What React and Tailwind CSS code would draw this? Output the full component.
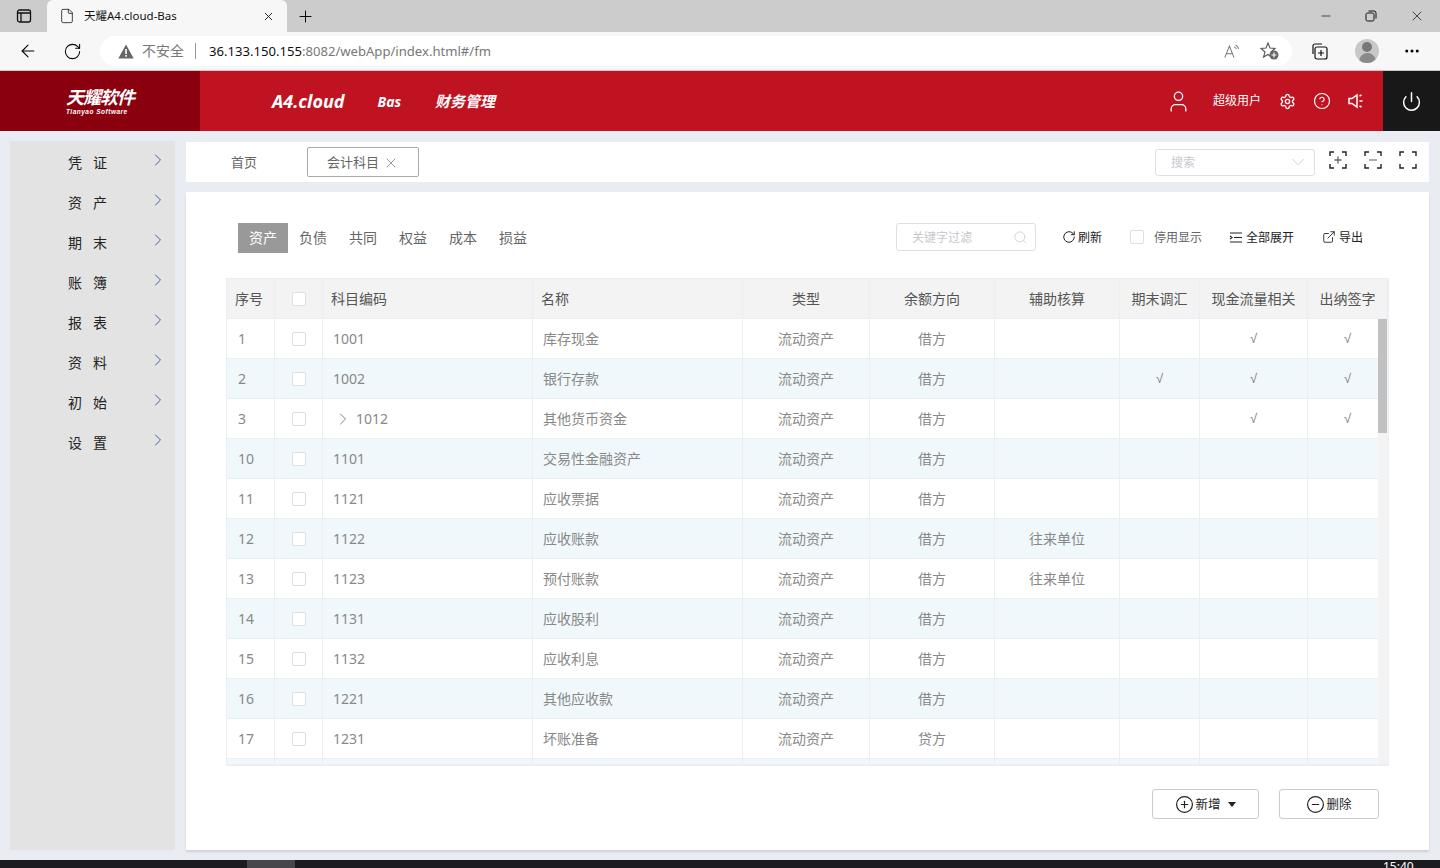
import React from 'react';
import { ChevronRight, ChevronDown, User, Settings, CircleHelp, Power, Search, RotateCw, ExternalLink, X, Plus, ArrowLeft, File, MoreHorizontal, Minus, CirclePlus, CircleMinus } from 'lucide-react';

const CJK = 'font-["Noto_Sans","Noto_Sans_CJK_SC",sans-serif]';
const widths = ['w-[48px]', 'w-[48px]', 'w-[210px]', 'w-[210px]', 'w-[127px]', 'w-[125px]', 'w-[125px]', 'w-[80px]', 'w-[108px]', 'w-[80px]'];
const menu = [['凭', '证'], ['资', '产'], ['期', '末'], ['账', '簿'], ['报', '表'], ['资', '料'], ['初', '始'], ['设', '置']];
const heads = ['序号', '', '科目编码', '名称', '类型', '余额方向', '辅助核算', '期末调汇', '现金流量相关', '出纳签字'];
const rows = [
  ['1', '1001', '库存现金', '流动资产', '借方', '', '', '√', '√'],
  ['2', '1002', '银行存款', '流动资产', '借方', '', '√', '√', '√'],
  ['3', '1012', '其他货币资金', '流动资产', '借方', '', '', '√', '√', true],
  ['10', '1101', '交易性金融资产', '流动资产', '借方', '', '', '', ''],
  ['11', '1121', '应收票据', '流动资产', '借方', '', '', '', ''],
  ['12', '1122', '应收账款', '流动资产', '借方', '往来单位', '', '', ''],
  ['13', '1123', '预付账款', '流动资产', '借方', '往来单位', '', '', ''],
  ['14', '1131', '应收股利', '流动资产', '借方', '', '', '', ''],
  ['15', '1132', '应收利息', '流动资产', '借方', '', '', '', ''],
  ['16', '1221', '其他应收款', '流动资产', '借方', '', '', '', ''],
  ['17', '1231', '坏账准备', '流动资产', '贷方', '', '', '', ''],
  ['18', '', '', '', '', '', '', '', ''],
];

function Box() {
  return <span className="block w-[14px] h-[14px] rounded-[2px] border border-[#dcdfe6] bg-white" />;
}

function Frame({ children }) {
  return (
    <svg width="18" height="18" viewBox="0 0 18 18" fill="none" stroke="#222" strokeWidth="1.4">
      <path d="M1 5V1h4M13 1h4v4M17 13v4h-4M5 17H1v-4" />
      {children}
    </svg>
  );
}

function Cell({ i, children, className = '' }) {
  return <div className={`${widths[i]} shrink-0 h-full border-r border-[#ebeef5] flex items-center ${className}`}>{children}</div>;
}

function Tick({ v }) {
  return <span className='font-["Liberation_Sans",sans-serif] text-[13px] text-[#777]'>{v}</span>;
}

function Row({ r, idx }) {
  return (
    <div className={`flex h-[40px] border-b border-[#ebeef5] text-[14px] text-[#888] ${idx % 2 ? 'bg-[#f1f8fb]' : 'bg-white'}`}>
      <Cell i={0} className="pl-[11px]">{r[0]}</Cell>
      <Cell i={1} className="justify-center"><Box /></Cell>
      <Cell i={2} className={r[9] ? 'pl-[10px]' : 'pl-[10px]'}>
        {r[9] && <ChevronRight size={20} strokeWidth={1} className="mr-[3px] text-[#666]" />}
        {r[1]}
      </Cell>
      <Cell i={3} className="pl-[10px]">{r[2]}</Cell>
      <Cell i={4} className="justify-center">{r[3]}</Cell>
      <Cell i={5} className="justify-center">{r[4]}</Cell>
      <Cell i={6} className="justify-center">{r[5]}</Cell>
      <Cell i={7} className="justify-center"><Tick v={r[6]} /></Cell>
      <Cell i={8} className="justify-center"><Tick v={r[7]} /></Cell>
      <Cell i={9} className="justify-center"><Tick v={r[8]} /></Cell>
    </div>
  );
}

export default function App() {
  return (
    <div className={`w-[1440px] h-[868px] overflow-hidden flex flex-col bg-[#e9edf3] ${CJK}`}>
      {/* tab strip */}
      <div className="h-[32px] shrink-0 bg-[#cccccc] flex items-end">
        <div className="w-[47px] h-full flex items-center justify-center">
          <svg width="16" height="16" viewBox="0 0 16 16" fill="none" stroke="#111" strokeWidth="1.3">
            <rect x="1.5" y="2" width="13" height="12" rx="2" />
            <path d="M1.5 5h13M5 5v9" />
          </svg>
        </div>
        <div className="w-[240px] h-[32px] bg-[#f7f7f7] rounded-t-[6px] flex items-center pl-[12px] pr-[12px] text-[11.5px] text-[#111]">
          <File size={16} strokeWidth={1.2} />
          <span className="ml-[9px] flex-1">天耀A4.cloud-Bas</span>
          <X size={13} strokeWidth={1.6} />
        </div>
        <div className="w-[36px] h-full flex items-center justify-center"><Plus size={19} strokeWidth={1.2} /></div>
        <div className="flex-1" />
        <div className="flex h-full items-center text-[#111] pr-[15px] gap-[32px]">
          <Minus size={14} strokeWidth={1.2} />
          <svg width="12" height="12" viewBox="0 0 12 12" fill="none" stroke="#111" strokeWidth="1">
            <rect x="1" y="3" width="8" height="8" rx="1.5" />
            <path d="M3.5 1h5.5a2 2 0 0 1 2 2v5.5" />
          </svg>
          <X size={16} strokeWidth={1.1} />
        </div>
      </div>
      {/* toolbar */}
      <div className="h-[39px] shrink-0 bg-[#f7f7f7] border-b border-[#c8c8c8] flex items-center">
        <div className="w-[56px] flex justify-center"><ArrowLeft size={20} strokeWidth={1.3} /></div>
        <div className="w-[32px] flex justify-center"><RotateCw size={19} strokeWidth={1.3} /></div>
        <div className="ml-[12px] w-[1192px] h-[30px] rounded-full bg-white flex items-center pl-[18px] pr-[12px] text-[14px]">
          <svg width="16" height="15" viewBox="0 0 16 15"><path d="M8 0.5 L15.7 14.5 H0.3 Z" fill="#666" /><rect x="7.2" y="5" width="1.6" height="5" fill="#fff" /><rect x="7.2" y="11" width="1.6" height="1.7" fill="#fff" /></svg>
          <span className="ml-[8px] text-[#777] -mt-[1px]">不安全</span>
          <span className="ml-[11px] w-px h-[16px] bg-[#999]" />
          <span className="ml-[13px] mt-[1px] text-[13.1px] text-[#111]">36.133.150.155<span className="text-[#777]">:8082/webApp/index.html#/fm</span></span>
          <span className="flex-1" />
          <svg width="17" height="17" viewBox="0 0 22 20" fill="none" stroke="#777" strokeWidth="1.3">
            <path d="M1 18 L7 3 L13 18 M3.2 13h7.6" />
            <path d="M13 4a5 5 0 0 1 3 3M15 1.5a8 8 0 0 1 4 5" />
          </svg>
          <svg className="ml-[19px]" width="20" height="20" viewBox="0 0 20 20" fill="none">
            <path d="M8 2 L10 7 L15 7.5 L11 11 L12 16.5 L8 13.5 L3.5 16 L5 11 L1 7.5 L6 7 Z" stroke="#555" strokeWidth="1.1" />
            <circle cx="14" cy="14" r="4.5" fill="#666" />
            <path d="M14 11.5v5M11.5 14h5" stroke="#fff" strokeWidth="1.1" />
          </svg>
        </div>
        <div className="ml-[18px] w-[18px] flex justify-center">
          <svg width="18" height="18" viewBox="0 0 18 18" fill="none" stroke="#111" strokeWidth="1.2">
            <rect x="5" y="5" width="12" height="12" rx="2" />
            <path d="M11 8v6M8 11h6M3 12 V4a2 2 0 0 1 2-2h7" />
          </svg>
        </div>
        <div className="ml-[27px] w-[24px] h-[24px] rounded-full bg-[#c8c8c8] overflow-hidden flex flex-col items-center">
          <span className="mt-[3px] w-[10px] h-[10px] rounded-full bg-[#777]" />
          <span className="mt-[1px] w-[17px] h-[10px] rounded-t-full bg-[#8a8a8a]" />
        </div>
        <div className="ml-[23px] w-[20px] flex justify-center"><MoreHorizontal size={18} strokeWidth={2} /></div>
      </div>
      {/* app header */}
      <div className="h-[60px] shrink-0 bg-[#c01322] flex items-center text-white">
        <div className="w-[200px] h-full bg-[#8b000f] flex flex-col items-start pl-[66px] pt-[16px]">
          <span className="text-[18px] leading-[21px] font-bold italic tracking-[-1px]">天耀软件</span>
          <span className='text-[6.5px] leading-[7px] italic font-bold tracking-[0.5px] font-["Liberation_Sans",sans-serif]'>Tianyao Software</span>
        </div>
        <span className='ml-[72px] text-[18px] font-bold italic font-["Open_Sans",sans-serif]'>A4.cloud</span>
        <span className='ml-[33px] text-[14px] font-bold italic font-["Open_Sans",sans-serif]'>Bas</span>
        <span className="ml-[34px] text-[15px] font-bold italic">财务管理</span>
        <div className="flex-1" />
        <User size={25} strokeWidth={1.25} />
        <span className="ml-[22px] text-[12px]">超级用户</span>
        <Settings size={17} strokeWidth={1.9} className="ml-[18px]" />
        <CircleHelp size={18} strokeWidth={1.6} className="ml-[17px]" />
        <svg className="ml-[17px]" width="16" height="16" viewBox="0 0 16 16" fill="none" stroke="#fff" strokeWidth="1.5">
          <path d="M1 5.5h3L9 2v12L4 10.5H1z" />
          <path d="M11.5 3l2-1M11.5 8h3M11.5 13l2 1" />
        </svg>
        <div className="ml-[19px] w-[57px] h-full bg-[#181818] flex items-center justify-center">
          <Power size={21} strokeWidth={1.7} />
        </div>
      </div>
      {/* body */}
      <div className="flex-1 flex min-h-0 pt-[10px] pl-[10px] pr-[11px] pb-[10px] gap-[11px]">
        <aside className="w-[165px] shrink-0 bg-[#e3e3e3] pt-[1px]">
          {menu.map((m, i) => (
            <div key={i} className="h-[40px] relative flex items-center text-[14px] text-[#222] pl-[58px]">
              <span>{m[0]}</span>
              <span className="ml-[11px]">{m[1]}</span>
              <ChevronRight size={20} strokeWidth={1.2} className="absolute left-[138px] top-[8px] text-[#3f64a8]" />
            </div>
          ))}
        </aside>
        <main className="flex-1 flex flex-col min-w-0 pt-[1px] gap-[10px]">
          <div className="h-[40px] shrink-0 bg-white flex items-center text-[13px] text-[#666] relative">
            <span className="ml-[45px] mt-[2px]">首页</span>
            <div className="ml-[50px] w-[112px] h-[30px] border border-[#aaa] rounded-[2px] flex items-center justify-center text-[13px] pt-[2px]">
              会计科目
              <X size={16} strokeWidth={1.3} className="ml-[4px] text-[#888]" />
            </div>
            <div className="flex-1" />
            <div className="w-[160px] h-[27px] border border-[#dcdfe6] rounded-[3px] flex items-center pl-[15px] pr-[5px] text-[12px] text-[#c5c8ce]">
              <span className="flex-1 mt-[1px]">搜索</span>
              <ChevronDown size={22} strokeWidth={0.9} />
            </div>
            <div className="ml-[14px] mr-[12px] flex gap-[17px] -mt-[4px]">
              <Frame><path d="M9 5.5v7M5.5 9h7" stroke="#667" /></Frame>
              <Frame><path d="M5 9h8" stroke="#889" /></Frame>
              <Frame />
            </div>
          </div>
          <div className="flex-1 bg-white shadow-[0_2px_2px_rgba(0,0,0,0.12)] px-[40px] flex flex-col min-h-0">
            <div className="mt-[28px] h-[35px] shrink-0 flex items-start pl-[12px] text-[14px] text-[#666]">
              <div className="mt-[3px] flex">
                <span className="w-[50px] h-[30px] pb-[1px] bg-[#999] text-white flex items-center justify-center">资产</span>
                {['负债', '共同', '权益', '成本', '损益'].map((t) => (
                  <span key={t} className="w-[50px] h-[30px] pb-[1px] flex items-center justify-center">{t}</span>
                ))}
              </div>
              <div className="flex-1" />
              <div className="mt-[3px] flex items-center">
                <div className="w-[140px] h-[28px] border border-[#dcdfe6] rounded-[3px] flex items-center pl-[15px] pr-[7px] text-[12px] text-[#c5c8ce]">
                  <span className="flex-1 mt-[2px]">关键字过滤</span>
                  <Search size={15} strokeWidth={1.2} />
                </div>
                <div className="h-[28px] ml-[26px] flex items-center text-[12px] text-[#222]">
                  <RotateCw size={14} strokeWidth={1.7} />
                  <span className="ml-[2px] mt-[2px]">刷新</span>
                </div>
                <div className="h-[28px] ml-[28px] flex items-center text-[12px] text-[#666]">
                  <Box />
                  <span className="ml-[10px] mt-[2px]">停用显示</span>
                </div>
                <div className="h-[28px] ml-[27px] flex items-center text-[12px] text-[#222]">
                  <svg width="13" height="13" viewBox="0 0 13 13" fill="none" stroke="#222" strokeWidth="1.2"><path d="M1 2h12M5 6.5h8M1 11h12M1 5l2 1.5-2 1.5" /></svg>
                  <span className="ml-[4px] mt-[2px]">全部展开</span>
                </div>
                <div className="h-[28px] ml-[28px] mr-[26px] flex items-center text-[12px] text-[#222]">
                  <ExternalLink size={14} strokeWidth={1.5} />
                  <span className="ml-[3px] mt-[2px]">导出</span>
                </div>
              </div>
            </div>
            <div className="mt-[23px] h-[488px] shrink-0 border border-b-2 border-[#ebeef5] relative overflow-hidden">
              <div className="flex h-[40px] bg-[#f3f3f3] border-b border-[#ebeef5] text-[14px] text-[#555] relative">
                <Cell i={0} className="pl-[8px]">{heads[0]}</Cell>
                <Cell i={1} className="justify-center"><Box /></Cell>
                <Cell i={2} className="pl-[8px]">{heads[2]}</Cell>
                <Cell i={3} className="pl-[8px]">{heads[3]}</Cell>
                {heads.slice(4).map((h, i) => (
                  <Cell key={h} i={i + 4} className="justify-center">{h}</Cell>
                ))}
              </div>
              <div className="h-[445px] overflow-hidden">
                {rows.map((r, i) => <Row key={r[0]} r={r} idx={i} />)}
              </div>
              <div className="absolute right-0 top-[40px] bottom-0 w-[10px] bg-[#f3f3f3]">
                <div className="w-[9px] h-[114px] bg-[#c1c1c1]" />
              </div>
            </div>
            <div className="flex justify-end mt-[23px] pr-[10px] text-[12.5px] text-[#222]">
              <div className="w-[107px] h-[30px] border border-[#ccc] rounded-[3px] flex items-center justify-center">
                <CirclePlus size={19} strokeWidth={1.5} />
                <span className="ml-[1px] mt-[2px]">新增</span>
                <svg className="ml-[7px] mt-[1px]" width="8" height="5" viewBox="0 0 8 5"><path d="M0 0h8L4 5z" fill="#222" /></svg>
              </div>
              <div className="ml-[20px] w-[100px] h-[30px] border border-[#ccc] rounded-[3px] flex items-center justify-center">
                <CircleMinus size={19} strokeWidth={1.5} />
                <span className="ml-[1px] mt-[2px]">删除</span>
              </div>
            </div>
          </div>
        </main>
      </div>
      {/* taskbar */}
      <div className="h-[8px] shrink-0 bg-[#1c1b1f] flex overflow-hidden text-white text-[12px] relative">
        <div className="ml-[247px] w-[48px] h-full bg-[#47474b]" />
        <span className="absolute left-[1383px] top-0 leading-[14px]">15:40</span>
      </div>
    </div>
  );
}
